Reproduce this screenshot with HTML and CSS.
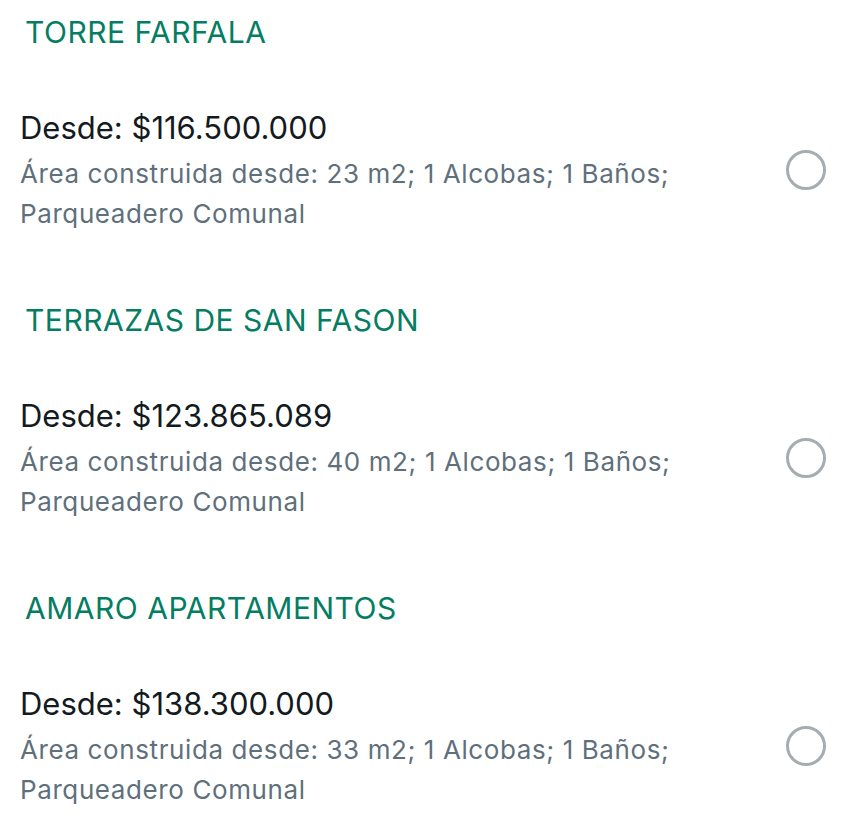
FILE: index.html
```html
<!DOCTYPE html>
<html lang="es">
<head>
<meta charset="utf-8">
<title>Proyectos</title>
<link rel="stylesheet" href="styles.css">
</head>
<body>
<div class="list">
  <div class="item">
    <div class="title">TORRE FARFALA</div>
    <div class="row">
      <div class="info">
        <div class="price">Desde: $116.500.000</div>
        <div class="desc">Área construida desde: 23 m2; 1 Alcobas; 1 Baños;<br>Parqueadero Comunal</div>
      </div>
      <span class="radio"></span>
    </div>
  </div>
  <div class="item">
    <div class="title">TERRAZAS DE SAN FASON</div>
    <div class="row">
      <div class="info">
        <div class="price">Desde: $123.865.089</div>
        <div class="desc">Área construida desde: 40 m2; 1 Alcobas; 1 Baños;<br>Parqueadero Comunal</div>
      </div>
      <span class="radio"></span>
    </div>
  </div>
  <div class="item">
    <div class="title">AMARO APARTAMENTOS</div>
    <div class="row">
      <div class="info">
        <div class="price">Desde: $138.300.000</div>
        <div class="desc">Área construida desde: 33 m2; 1 Alcobas; 1 Baños;<br>Parqueadero Comunal</div>
      </div>
      <span class="radio"></span>
    </div>
  </div>
</div>
</body>
</html>
```

FILE: styles.css
```css
html, body {
  margin: 0;
  padding: 0;
  background: #ffffff;
}
body {
  font-family: Inter, "Liberation Sans", Arial, sans-serif;
  width: 848px;
  height: 818px;
  overflow: hidden;
}
.item {
  padding: 12px 22px 54px 20px;
}
.item:last-child {
  padding-bottom: 0;
}
.title {
  margin-left: 5px;
  font-size: 30px;
  line-height: 40px;
  letter-spacing: 0.5px;
  color: #047d62;
  margin-bottom: 54px;
}
.row {
  display: flex;
  align-items: center;
  justify-content: space-between;
}
.price {
  font-size: 31px;
  line-height: 44px;
  color: #131a20;
}
.desc {
  margin-top: 4px;
  font-size: 26px;
  line-height: 40px;
  letter-spacing: 0.6px;
  color: #5f707d;
}
.radio {
  width: 40px;
  height: 40px;
  box-sizing: border-box;
  border: 3px solid #a5adb3;
  border-radius: 50%;
  flex: none;
}
```
